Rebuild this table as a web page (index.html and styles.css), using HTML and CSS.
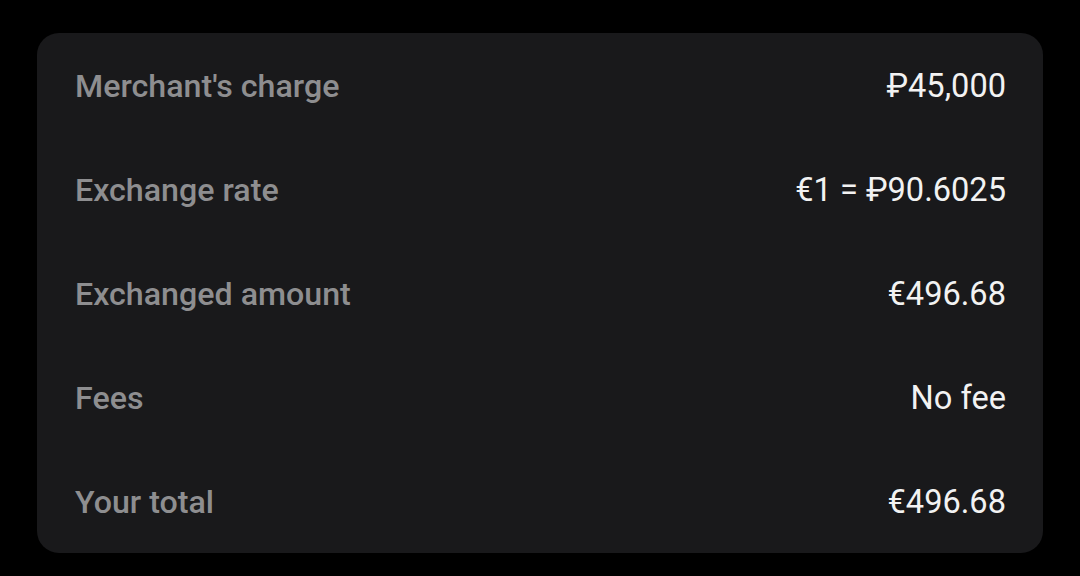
FILE: index.html
```html
<!DOCTYPE html>
<html>
    <head>
        <meta charset="utf-8">
        <meta name="viewport" content="width=device-width, initial-scale=1">
        <link rel="stylesheet" href="styles.css">
    </head>

    <body>
        <!--summary card starts-->
        <div class="summary">
            <div class="row">
                <span class="label">Merchant's charge</span>
                <span class="value">₽45,000</span>
            </div>
            <div class="row">
                <span class="label">Exchange rate</span>
                <span class="value">€1 = ₽90.6025</span>
            </div>
            <div class="row">
                <span class="label">Exchanged amount</span>
                <span class="value">€496.68</span>
            </div>
            <div class="row">
                <span class="label">Fees</span>
                <span class="value">No fee</span>
            </div>
            <div class="row">
                <span class="label">Your total</span>
                <span class="value">€496.68</span>
            </div>
        </div>
        <!--summary card ends-->
    </body>
</html>
```

FILE: styles.css
```css
* {box-sizing: border-box}

body {
  margin: 0;
  background: #000;
  font-family: Roboto, "Liberation Sans", sans-serif;
  padding: 33px 37px 0 37px;
}

/* the card */
.summary {
  background: #19191b;
  border-radius: 22px;
  padding: 0 37px 0 38px;
}

.row {
  height: 104px;
  display: flex;
  align-items: center;
  justify-content: space-between;
  padding-top: 2px;
}

.label {
  color: #8e8e90;
  font-size: 32.2px;
  font-weight: 500;
}

.value {
  color: #f2f2f2;
  font-size: 32.6px;
}
```
